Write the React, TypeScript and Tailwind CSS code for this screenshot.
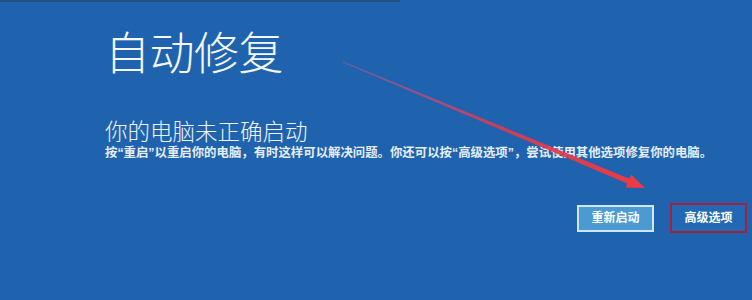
export default function App() {
  return (
    <div
      className="relative h-[300px] w-[752px] overflow-hidden bg-[#1f63ae] text-white"
      style={{ fontFamily: '"Liberation Sans", "Noto Sans CJK SC", sans-serif' }}
    >
      {/* dark strip along the top edge */}
      <div className="h-[2px] w-[400px] bg-[#24507f]" />

      <div className="pl-[105px] pt-[27px]">
        <h1 className="text-[45px] font-light leading-[52px] tracking-[-0.5px] text-[#f4f8fc]">
          自动修复
        </h1>
        <h2 className="mt-[39px] text-[22.5px] font-light leading-[25px] text-[#eef4fa]">
          你的电脑未正确启动
        </h2>
        <p className="text-[12.4px] font-bold leading-[16px] text-[#e6eef8]">
          按“重启”以重启你的电脑，有时这样可以解决问题。你还可以按“高级选项”，尝试使用其他选项修复你的电脑。
        </p>
      </div>

      <div className="mt-[42px] flex items-center justify-end gap-[16px] pr-[5px]">
        <button className="flex h-[27px] w-[77px] items-center justify-center border-2 border-[#cfe6f7] bg-[#4b9ad4] text-[12px] font-bold text-white">
          重新启动
        </button>
        <button className="flex h-[30px] w-[77px] items-center justify-center border-2 border-[#a3213c] bg-[#2368b2] text-[12px] font-bold text-white">
          高级选项
        </button>
      </div>

      {/* red annotation arrow */}
      <svg className="pointer-events-none absolute left-0 top-0" width="752" height="300" viewBox="0 0 752 300">
        <defs>
          <linearGradient id="arrowFade" x1="343" y1="62" x2="645" y2="188" gradientUnits="userSpaceOnUse">
            <stop offset="0" stopColor="#c8558a" stopOpacity="0.5" />
            <stop offset="0.5" stopColor="#dd3a52" stopOpacity="0.9" />
            <stop offset="1" stopColor="#f03a42" stopOpacity="1" />
          </linearGradient>
        </defs>
        <polygon
          points="342.8,62.6 627.4,183.4 625.7,187.6 645,188 631.1,174.6 629.4,178.8 343.2,61.4"
          fill="url(#arrowFade)"
        />
      </svg>
    </div>
  );
}
